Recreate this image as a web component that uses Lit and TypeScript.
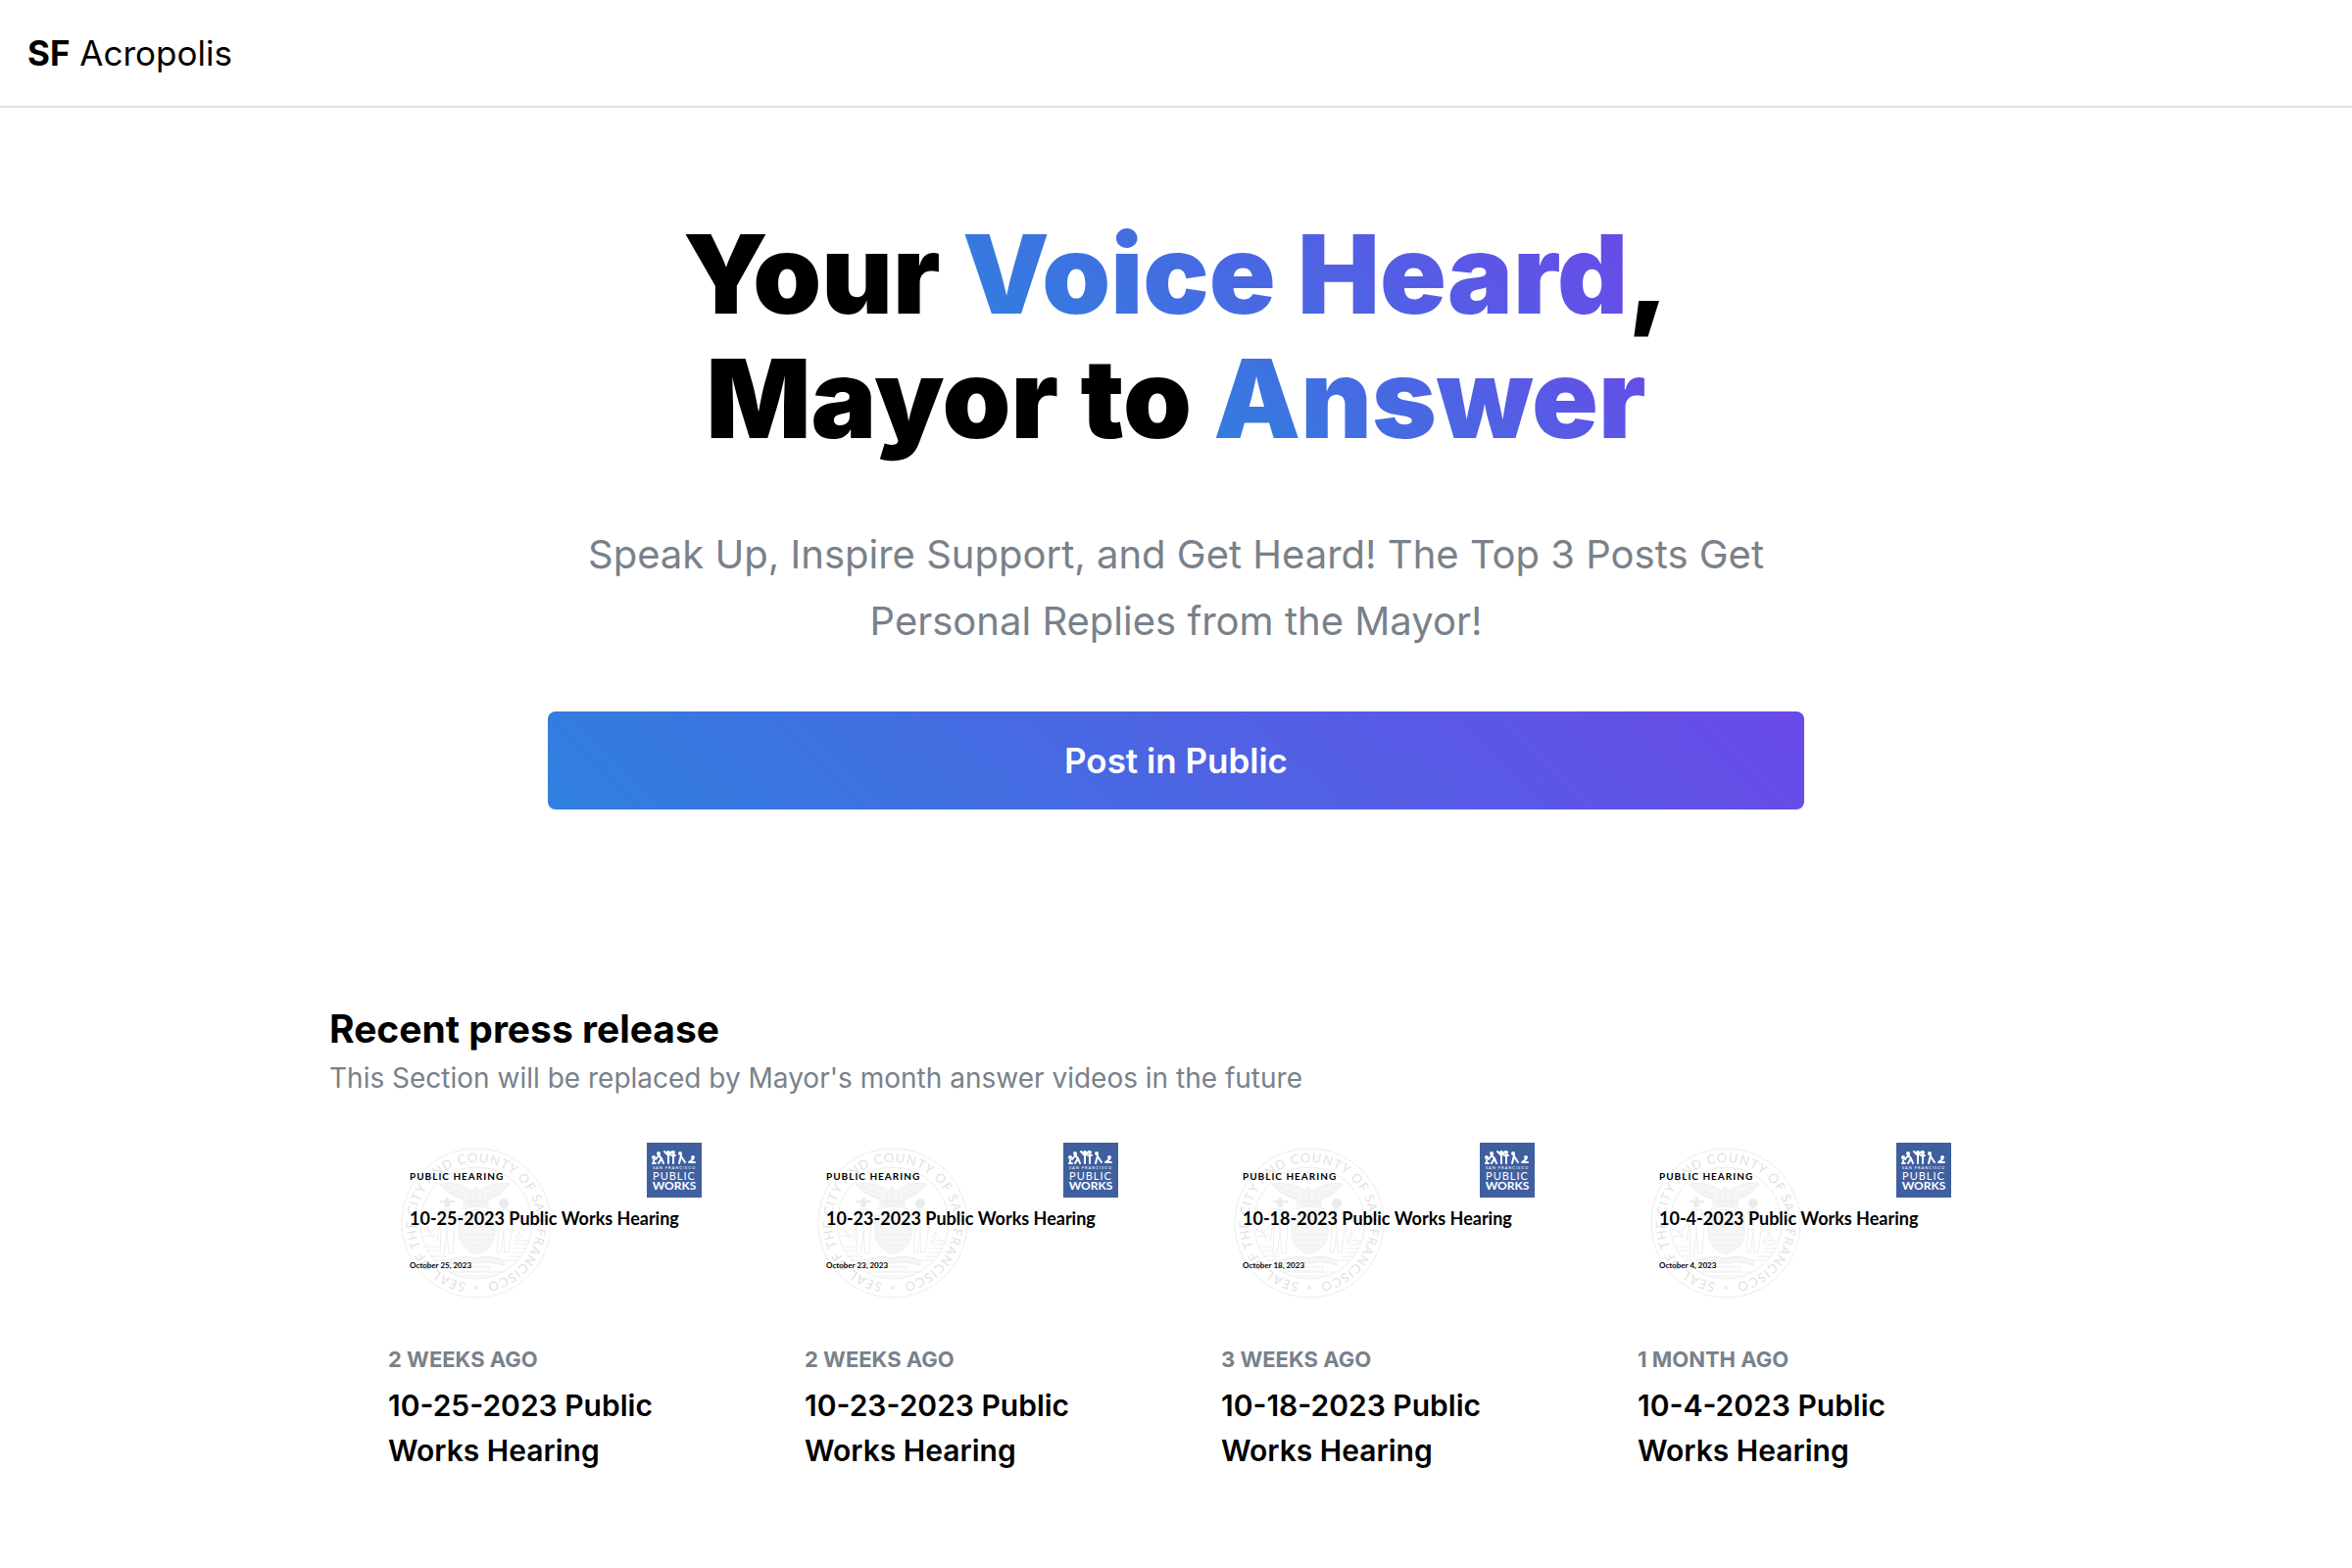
import { LitElement, html, css, svg } from "lit";
import { customElement, property } from "lit/decorators.js";

interface Release {
  age: string;
  title: string;
  date: string;
}

const RELEASES: Release[] = [
  { age: "2 weeks ago", title: "10-25-2023 Public Works Hearing", date: "October 25, 2023" },
  { age: "2 weeks ago", title: "10-23-2023 Public Works Hearing", date: "October 23, 2023" },
  { age: "3 weeks ago", title: "10-18-2023 Public Works Hearing", date: "October 18, 2023" },
  { age: "1 month ago", title: "10-4-2023 Public Works Hearing", date: "October 4, 2023" },
];

/** Title slide of a hearing: city seal watermark, department badge and captions. */
@customElement("hearing-slide")
export class HearingSlide extends LitElement {
  @property() heading = "";
  @property() date = "";

  static styles = css`
    :host {
      display: block;
    }
    .slide {
      display: block;
      width: 100%;
      font-family: Lato, "Open Sans", sans-serif;
    }
    .seal {
      fill: none;
      stroke: #ededed;
      stroke-width: 1;
    }
    .seal .solid {
      fill: #ebebeb;
      stroke: none;
    }
    .seal .tint {
      fill: #f6f6f6;
    }
    .seal-text {
      fill: #e2e2e2;
      stroke: none;
      font-size: 13px;
      letter-spacing: 1px;
      text-anchor: middle;
    }
    .kicker {
      font-size: 10px;
      font-weight: 700;
      letter-spacing: 1px;
    }
    .heading {
      font-size: 18px;
      font-weight: 700;
    }
    .date {
      font-size: 8px;
      font-weight: 700;
    }
    .badge-bg {
      fill: #3f5f9f;
    }
    .badge {
      fill: #fff;
      text-anchor: middle;
    }
    .people {
      fill: none;
      stroke: #fff;
      stroke-width: 2;
      stroke-linecap: round;
      stroke-linejoin: round;
    }
    .people .head {
      fill: #fff;
      stroke: none;
    }
    .city {
      font-size: 4px;
      letter-spacing: 1px;
    }
    .public {
      font-size: 11px;
      letter-spacing: 1px;
    }
    .works {
      font-size: 12px;
      font-weight: 700;
    }
  `;

  private seal() {
    return svg`
      <g class="seal">
        <circle cx="90" cy="94" r="76" />
        <circle cx="90" cy="94" r="57" />
        <path id="ring" d="M90 156 A62 62 0 0 1 90 32 A62 62 0 0 1 90 156" stroke="none" />
        <text class="seal-text">
          <textPath href="#ring" startOffset="50%">SEAL OF THE CITY AND COUNTY OF SAN FRANCISCO</textPath>
        </text>
        <circle class="solid" cx="90" cy="160" r="2" />
        <path class="tint" d="M52 54 Q68 52 80 58 L86 61 L89 56 L93 61 L99 58 Q110 52 124 54 Q119 62 111 66 L102 70 L102 76 H77 V70 L67 66 Q58 62 52 54 Z" />
        <path d="M57 56 L78 66 M62 62 L78 69 M119 56 L101 66 M114 62 L101 69 M78 72 H101 M84 62 V76 M90 60 V76 M96 62 V76" />
        <path d="M74 80 Q90 74 106 80 M78 83 Q90 78 102 83" />
        <path class="tint" d="M72 86 H109 V106 Q107 120 90 126 Q74 120 72 106 Z" />
        <path d="M74 102 L82 92 L88 99 L97 88 L108 102 M74 106 H108 M76 111 H105 M80 116 H101 M85 121 H96" />
        <path class="solid" d="M53 71 H58 Q60 64 63 71 H68 V73 H53 Z" />
        <circle class="solid" cx="60" cy="75" r="3" />
        <path d="M56 80 H65 L68 96 L66 125 H62 L60 104 L57 125 H53 L54 98 L51 94 Z M65 82 L73 90 M60 80 V104 M54 88 L50 112" />
        <circle class="solid" cx="118" cy="74" r="5" />
        <path d="M113 80 H122 L127 94 L123 124 H119 L118 104 L115 124 H111 L113 98 Z M113 82 L106 90 M118 80 V104 M124 84 L128 104" />
        <path d="M35 100 L43 104 L50 96 M36 108 L49 106 M40 98 L46 110 M128 112 H142 L139 116 H131 Z M133 111 V103 L138 110 M129 110 L132 105" />
        <path d="M38 118 H52 M40 122 H51 M128 120 H141 M126 124 H138 M44 128 H60 M122 128 H136 M48 132 H64 M116 132 H132 M62 144 H118 M70 148 H110" />
        <path class="tint" d="M62 132 Q76 126 90 130 Q104 126 118 132 V137 Q104 132 90 135 Q76 132 62 137 Z" />
        <path d="M76 139 H104 V143 H76 Z" />
      </g>
    `;
  }

  private badge() {
    return svg`
      <g>
        <rect class="badge-bg" x="264" y="12" width="56" height="56" />
        <g class="people">
          <circle class="head" cx="271" cy="27" r="2" />
          <path d="M271 30 V32 L270 33 H273" />
          <circle class="head" cx="276" cy="23" r="2" />
          <path d="M276 25 L279 28 L276 33 M279 28 L281 33 M277 24 L273 29" />
          <circle class="head" cx="286" cy="22" r="2" />
          <path d="M286 25 V33 M286 25 L282 21 M286 25 L290 21" />
          <circle class="head" cx="291" cy="22" r="2" />
          <path d="M291 25 V33 M289 25 H293" />
          <circle class="head" cx="298" cy="23" r="2" />
          <path d="M299 25 L297 33 M299 26 L303 32" />
          <circle class="head" cx="311" cy="27" r="2" />
          <path d="M311 29 L307 32 H313" />
        </g>
        <g class="badge">
          <text class="city" x="292" y="39">SAN FRANCISCO</text>
          <text class="public" x="292" y="50">PUBLIC</text>
          <text class="works" x="292" y="60">WORKS</text>
        </g>
      </g>
    `;
  }

  render() {
    return html`
      <svg class="slide" viewBox="0 0 333 187" role="img" aria-label=${this.heading}>
        ${this.seal()} ${this.badge()}
        <text class="kicker" x="22" y="50">PUBLIC HEARING</text>
        <text class="heading" x="22" y="96">${this.heading}</text>
        <text class="date" x="22" y="140">${this.date}</text>
      </svg>
    `;
  }
}

@customElement("app-root")
export class AppRoot extends LitElement {
  static styles = css`
    :host {
      display: block;
      color: #000;
      background: #fff;
      font-family: Inter, "Liberation Sans", sans-serif;
    }
    .header {
      display: flex;
      align-items: center;
      height: 108px;
      padding: 0 28px;
      border-bottom: 2px solid #dee2e6;
    }
    .brand {
      color: inherit;
      text-decoration: none;
      font-size: 35px;
      line-height: 56px;
    }
    .hero {
      max-width: 1282px;
      margin: 0 auto;
      padding: 106px 32px 0;
      text-align: center;
    }
    .title {
      margin: 0;
      font-size: 112px;
      font-weight: 900;
      line-height: 127px;
    }
    .accent {
      color: transparent;
      background: linear-gradient(45deg, #2f80de 0%, #6a49e8 100%);
      -webkit-background-clip: text;
      background-clip: text;
    }
    .lead {
      margin: 62px 0 58px;
      color: #79818a;
      font-size: 40px;
      line-height: 68px;
    }
    .post {
      display: block;
      width: 100%;
      height: 100px;
      border: 0;
      border-radius: 8px;
      color: #fff;
      background: linear-gradient(45deg, #2f80de 0%, #6a49e8 100%);
      font: 600 35px/56px Inter, sans-serif;
      cursor: pointer;
    }
    .press {
      max-width: 1728px;
      margin: 0 auto;
      padding: 194px 32px 80px;
    }
    .section-title {
      margin: 0;
      font-size: 39px;
      font-weight: 700;
      line-height: 60px;
    }
    .note {
      margin: 0;
      color: #79818a;
      font-size: 28px;
      line-height: 40px;
    }
    .releases {
      display: grid;
      grid-template-columns: repeat(4, 1fr);
      gap: 92px;
      margin: 34px 0 0;
      padding: 0 60px;
      list-style: none;
    }
    .age {
      margin: 30px 0 8px;
      color: #79818a;
      font-size: 22px;
      font-weight: 700;
      line-height: 32px;
      text-transform: uppercase;
    }
    .name {
      margin: 0;
      font-size: 30px;
      font-weight: 600;
      line-height: 46px;
    }
    .link {
      display: block;
      color: inherit;
      text-decoration: none;
    }
  `;

  render() {
    return html`
      <header class="header">
        <a class="brand" href="#"><strong>SF</strong> Acropolis</a>
      </header>
      <main>
        <section class="hero">
          <h1 class="title">
            Your <span class="accent">Voice Heard</span>,<br />
            Mayor to <span class="accent">Answer</span>
          </h1>
          <p class="lead">
            Speak Up, Inspire Support, and Get Heard! The Top 3 Posts Get Personal Replies from the
            Mayor!
          </p>
          <button class="post" type="button">Post in Public</button>
        </section>
        <section class="press">
          <h2 class="section-title">Recent press release</h2>
          <p class="note">This Section will be replaced by Mayor's month answer videos in the future</p>
          <ul class="releases">
            ${RELEASES.map(
              (r) => html`
                <li>
                  <a class="link" href="#">
                    <hearing-slide .heading=${r.title} .date=${r.date}></hearing-slide>
                    <p class="age">${r.age}</p>
                    <h3 class="name">${r.title}</h3>
                  </a>
                </li>
              `,
            )}
          </ul>
        </section>
      </main>
    `;
  }
}
